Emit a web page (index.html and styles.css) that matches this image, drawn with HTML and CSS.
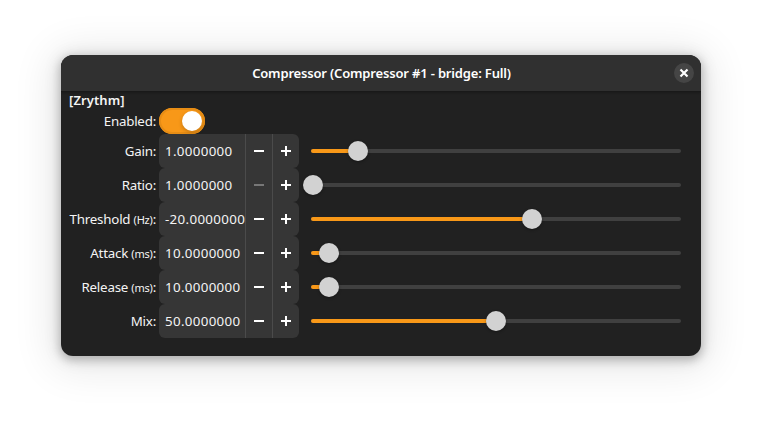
FILE: index.html
```
<!DOCTYPE html>
<html lang="en">
<head>
<meta charset="utf-8">
<title>Compressor</title>
<link rel="stylesheet" href="styles.css">
</head>
<body>
<main class="window">
  <header class="header">
    <h1 class="title">Compressor (Compressor #1 - bridge: Full)</h1>
    <button class="close" aria-label="Close"><svg width="10" height="10" viewBox="0 0 10 10"><path d="M1.5 1.5l7 7M8.5 1.5l-7 7"/></svg></button>
  </header>
  <section class="content">
    <h2 class="group">[Zrythm]</h2>
    <div class="row toggle-row"><span class="label">Enabled:</span><span class="switch"><i></i></span></div>
    <div class="row"><span class="label">Gain:</span>
      <div class="spin"><span class="value">1.0000000</span><button class="minus"></button><button class="plus"></button></div>
      <div class="slider"><div class="fill" style="width:47px"><i class="knob"></i></div></div></div>
    <div class="row"><span class="label">Ratio:</span>
      <div class="spin"><span class="value">1.0000000</span><button class="minus disabled"></button><button class="plus"></button></div>
      <div class="slider"><div class="fill" style="width:2px"><i class="knob"></i></div></div></div>
    <div class="row"><span class="label">Threshold <small>(Hz)</small>:</span>
      <div class="spin"><span class="value">-20.0000000</span><button class="minus"></button><button class="plus"></button></div>
      <div class="slider"><div class="fill" style="width:221px"><i class="knob"></i></div></div></div>
    <div class="row"><span class="label">Attack <small>(ms)</small>:</span>
      <div class="spin"><span class="value">10.0000000</span><button class="minus"></button><button class="plus"></button></div>
      <div class="slider"><div class="fill" style="width:18px"><i class="knob"></i></div></div></div>
    <div class="row"><span class="label">Release <small>(ms)</small>:</span>
      <div class="spin"><span class="value">10.0000000</span><button class="minus"></button><button class="plus"></button></div>
      <div class="slider"><div class="fill" style="width:18px"><i class="knob"></i></div></div></div>
    <div class="row"><span class="label">Mix:</span>
      <div class="spin"><span class="value">50.0000000</span><button class="minus"></button><button class="plus"></button></div>
      <div class="slider"><div class="fill" style="width:185px"><i class="knob"></i></div></div></div>
  </section>
</main>
</body>
</html>
```

FILE: styles.css
```
* { box-sizing: border-box; }
body {
  margin: 0;
  padding: 55px 61px 0;
  height: 423px;
  overflow: hidden;
  background: #fff;
  color: #f4f4f4;
  font: 13.33px/18px "Noto Sans", sans-serif;
}
button { border: 0; padding: 0; background: none; color: #fff; }
.window {
  width: 640px;
  height: 301px;
  border-radius: 12px;
  overflow: hidden;
  background: #212121;
  box-shadow: 0 3px 9px 1px rgba(0,0,0,.2), 0 2px 14px 5px rgba(0,0,0,.08), 0 4px 40px 10px rgba(0,0,0,.09);
}
.header {
  display: grid;
  grid-template-columns: 37px 1fr 37px;
  align-items: center;
  height: 36px;
  background: #303030;
  box-shadow: 0 1px #191919, 0 2px 2px rgba(0,0,0,.2);
}
.title {
  grid-column: 2;
  margin: 0;
  padding-left: 1px;
  text-align: center;
  white-space: nowrap;
  font-size: 13px;
  font-weight: 600;
  letter-spacing: -.17px;
  color: #fff;
}
.close {
  display: grid;
  place-items: center;
  width: 20px;
  height: 20px;
  margin-left: 10px;
  border-radius: 50%;
  background: #454545;
}
.close svg { fill: none; stroke: #fff; stroke-width: 2.2; }
.group { margin: 0; padding-left: 8px; height: 17px; font-size: 13px; font-weight: 600; letter-spacing: .1px; }
.row {
  display: grid;
  grid-template-columns: 95px 140px 370px;
  align-items: center;
  height: 34px;
}
.label { margin-right: 0; text-align: right; white-space: nowrap; letter-spacing: -.22px; }
.label small { font-size: 11px; }
.row > .spin, .row > .switch { margin-left: 3px; }
.toggle-row { height: 26px; }
.switch {
  width: 46px;
  height: 26px;
  padding: 3px;
  border-radius: 13px;
  background: #f89818;
  box-shadow: inset 0 0 0 2px #e78d15;
}
.switch i {
  display: block;
  width: 20px;
  height: 20px;
  margin-left: 20px;
  border-radius: 50%;
  background: #fff;
  box-shadow: 0 2px 4px rgba(0,0,0,.2);
}
.spin {
  display: grid;
  grid-template-columns: 86px 27px 27px;
  width: 140px;
  height: 34px;
  border-radius: 6px;
  background: #363636;
}
.value { padding-left: 6px; line-height: 34px; white-space: nowrap; letter-spacing: .33px; }
.spin button {
  display: grid;
  place-items: center;
  border-left: 1px solid #4b4b4b;
}
.minus::before, .plus::before, .plus::after { content: ""; grid-area: 1 / 1; width: 10px; height: 2px; background: #fff; }
.plus::after { width: 2px; height: 10px; }
.minus.disabled::before { background: #777; }
.slider { width: 370px; height: 4px; margin-left: 15px; border-radius: 2px; background: #404040; }
.fill { display: flex; align-items: center; justify-content: flex-end; height: 4px; border-radius: 2px; background: #f89818; }
.knob { flex: none; width: 20px; height: 20px; margin-right: -10px; border-radius: 50%; background: #d2d2d2; box-shadow: 0 1px 3px rgba(0,0,0,.35); }
```
